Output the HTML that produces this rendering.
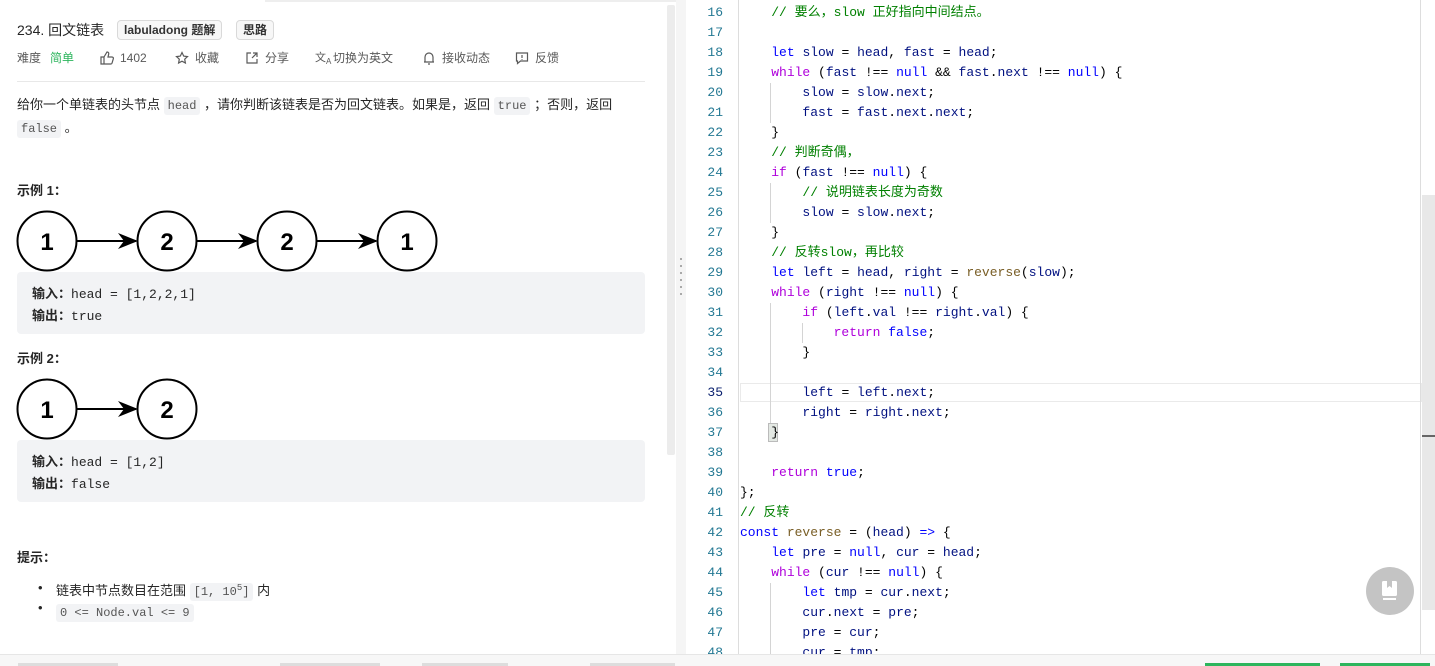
<!DOCTYPE html>
<html><head><meta charset="utf-8"><style>
*{margin:0;padding:0;box-sizing:border-box}
body{width:1435px;height:666px;overflow:hidden;background:#fff;position:relative;font-family:"Liberation Sans","Noto Sans CJK SC",sans-serif;color:#262626}
.abs{position:absolute}
.tag{position:absolute;top:20px;height:20px;border:1px solid #d9d9d9;border-radius:4px;background:#f7f7f7;font-size:12px;font-weight:bold;line-height:18px;padding:0 6px;color:#333}
.meta{position:absolute;top:50px;font-size:12px;color:#595959;line-height:16px}
.ic{position:absolute;top:51px}
code.i{font-family:"Liberation Mono",monospace;font-size:12px;background:#f2f3f5;color:#555;padding:2px 4px;border-radius:3px}
.box{position:absolute;left:17px;width:628px;background:#f2f3f5;border-radius:4px;font-size:13px;padding:11px 15px;line-height:21px}
.box b{font-weight:bold}
.box span{font-family:"Liberation Mono",monospace;font-size:13px}
.ln{position:absolute;left:686px;width:37px;text-align:right;font-family:"Liberation Mono",monospace;font-size:13px;color:#237893;line-height:20px}
.cl{position:absolute;left:740px;font-family:"Liberation Mono","Noto Sans CJK SC",monospace;font-size:13px;line-height:20px;white-space:pre;color:#000}
.k{color:#0000ff}.c{color:#008000}.w{color:#af00db}.v{color:#001080}.f{color:#795e26}
</style></head><body>
<div class="abs" style="left:265px;top:0;width:415px;height:2px;background:#eee"></div>
<div class="abs" style="left:17px;top:20px;font-size:14px;line-height:20px">234. 回文链表</div>
<div class="tag" style="left:117px">labuladong 题解</div>
<div class="tag" style="left:236px">思路</div>
<div class="meta" style="left:17px">难度</div>
<div class="meta" style="left:50px;color:#2db55d">简单</div>
<svg class="ic" style="left:100px" width="14" height="14" fill="none" stroke="#595959" stroke-width="1.2"><path d="M1 6h3v7H1zM4 6l3-5c1.5 0 2 1 1.6 2.5L8 6h4c1 0 1.6.8 1.3 1.8l-1.3 4.4c-.2.5-.6.8-1.1.8H4"/></svg>
<div class="meta" style="left:120px">1402</div>
<svg class="ic" style="left:175px" width="14" height="14" fill="none" stroke="#595959" stroke-width="1.2"><path d="M7 1.5l1.7 3.6 3.8.5-2.8 2.6.7 3.8L7 10.2 3.6 12l.7-3.8L1.5 5.6l3.8-.5z"/></svg>
<div class="meta" style="left:195px">收藏</div>
<svg class="ic" style="left:245px" width="14" height="14" fill="none" stroke="#595959" stroke-width="1.2"><path d="M6 2H2v10h10V8M8 2h4v4M12 2L7 7"/></svg>
<div class="meta" style="left:265px">分享</div>
<div class="meta" style="left:315px;font-size:11px">文<sub style="font-size:8px">A</sub></div>
<div class="meta" style="left:333px">切换为英文</div>
<svg class="ic" style="left:422px" width="14" height="14" fill="none" stroke="#595959" stroke-width="1.2"><path d="M3 11V6a4 4 0 018 0v5zM2 11h10M6 13h2"/></svg>
<div class="meta" style="left:442px">接收动态</div>
<svg class="ic" style="left:515px" width="14" height="14" fill="none" stroke="#595959" stroke-width="1.2"><path d="M1.5 2h11v8h-7l-3 2.5V10h-1z"/><path d="M7 4v3M7 8v.8"/></svg>
<div class="meta" style="left:535px">反馈</div>
<div class="abs" style="left:17px;top:81px;width:628px;height:1px;background:#e8e8e8"></div>
<div class="abs" style="left:17px;top:94px;font-size:13px;line-height:22px;width:630px">给你一个单链表的头节点 <code class="i">head</code> ，请你判断该链表是否为回文链表。如果是，返回 <code class="i">true</code> ；否则，返回<br><code class="i">false</code> 。</div>
<div class="abs" style="left:17px;top:180px;font-size:13px;font-weight:bold">示例 1：</div>
<svg class="abs" style="left:0;top:205px" width="460" height="72">
<defs><marker id="a" markerWidth="10" markerHeight="8" refX="9" refY="4" orient="auto"><path d="M0,0 L10,4 L0,8 L3,4Z" fill="#000"/></marker></defs>
<g fill="none" stroke="#000" stroke-width="2">
<circle cx="47" cy="36" r="29.5"/><circle cx="167" cy="36" r="29.5"/><circle cx="287" cy="36" r="29.5"/><circle cx="407" cy="36" r="29.5"/>
<line x1="77" y1="36" x2="136" y2="36" marker-end="url(#a)"/><line x1="197" y1="36" x2="256" y2="36" marker-end="url(#a)"/><line x1="317" y1="36" x2="376" y2="36" marker-end="url(#a)"/></g>
<g font-family="Liberation Sans" font-weight="bold" font-size="24" text-anchor="middle"><text x="47" y="45">1</text><text x="167" y="45">2</text><text x="287" y="45">2</text><text x="407" y="45">1</text></g></svg>
<div class="box" style="top:272px;height:62px"><b>输入：</b><span>head = [1,2,2,1]</span><br><b>输出：</b><span>true</span></div>
<div class="abs" style="left:17px;top:348px;font-size:13px;font-weight:bold">示例 2：</div>
<svg class="abs" style="left:0;top:373px" width="200" height="72">
<g fill="none" stroke="#000" stroke-width="2"><circle cx="47" cy="36" r="29.5"/><circle cx="167" cy="36" r="29.5"/>
<line x1="77" y1="36" x2="136" y2="36" marker-end="url(#a)"/></g>
<g font-family="Liberation Sans" font-weight="bold" font-size="24" text-anchor="middle"><text x="47" y="45">1</text><text x="167" y="45">2</text></g></svg>
<div class="box" style="top:440px;height:62px"><b>输入：</b><span>head = [1,2]</span><br><b>输出：</b><span>false</span></div>
<div class="abs" style="left:17px;top:547px;font-size:13px;font-weight:bold">提示：</div>
<div class="abs" style="left:38px;top:578px;font-size:13px;line-height:20px">•</div>
<div class="abs" style="left:38px;top:598px;font-size:13px;line-height:20px">•</div>
<div class="abs" style="left:56px;top:578px;font-size:13px;line-height:20px">链表中节点数目在范围 <code class="i">[1, 10<sup style="font-size:9px">5</sup>]</code> 内<br><code class="i">0 &lt;= Node.val &lt;= 9</code></div>
<div class="abs" style="left:667px;top:5px;width:8px;height:450px;background:#ececec;border-radius:2px"></div>
<div class="abs" style="left:676px;top:0;width:10px;height:654px;background:#f5f5f5"></div>
<div class="abs" style="left:680px;top:258px;width:2px;height:42px;background:repeating-linear-gradient(#aaa 0 2px,transparent 2px 7px)"></div>
<div class="abs" style="left:0;top:654px;width:1435px;height:12px;background:#f7f7f7;border-top:1px solid #e6e6e6"></div>
<div class="abs" style="left:18px;top:663px;width:100px;height:3px;background:#ddd"></div>
<div class="abs" style="left:280px;top:663px;width:100px;height:3px;background:#ddd"></div>
<div class="abs" style="left:422px;top:663px;width:86px;height:3px;background:#ddd"></div>
<div class="abs" style="left:590px;top:663px;width:85px;height:3px;background:#ddd"></div>
<div class="abs" style="left:738px;top:0;width:1px;height:654px;background:#ddd"></div>
<div class="abs" style="left:740px;top:383px;width:682px;height:19px;border:1px solid #eaeaea"></div>
<div class="abs" style="left:1422px;top:195px;width:13px;height:415px;background:#e8e8e8"></div>
<div class="abs" style="left:1422px;top:435px;width:13px;height:2px;background:#666"></div>
<div class="abs" style="left:1420px;top:0;width:1px;height:654px;background:#ddd"></div>
<div class="abs" style="left:770px;top:83px;width:1px;height:40px;background:#d4d4d4"></div>
<div class="abs" style="left:770px;top:183px;width:1px;height:40px;background:#d4d4d4"></div>
<div class="abs" style="left:770px;top:303px;width:1px;height:120px;background:#d4d4d4"></div>
<div class="abs" style="left:802px;top:323px;width:1px;height:20px;background:#d4d4d4"></div>
<div class="abs" style="left:770px;top:583px;width:1px;height:71px;background:#d4d4d4"></div>
<div class="abs" style="left:768px;top:423px;width:10px;height:19px;background:#e3e8e3;border:1px solid #bbb"></div>
<div class="ln" style="top:3px">16<br>17<br>18<br>19<br>20<br>21<br>22<br>23<br>24<br>25<br>26<br>27<br>28<br>29<br>30<br>31<br>32<br>33<br>34<br><span style="color:#0b216f">35</span><br>36<br>37<br>38<br>39<br>40<br>41<br>42<br>43<br>44<br>45<br>46<br>47<br>48</div>
<div class="cl" style="top:3px"><span class="c">    // 要么，slow 正好指向中间结点。</span>

    <span class="k">let</span> <span class="v">slow</span> = <span class="v">head</span>, <span class="v">fast</span> = <span class="v">head</span>;
    <span class="w">while</span> (<span class="v">fast</span> !== <span class="k">null</span> &amp;&amp; <span class="v">fast</span>.<span class="v">next</span> !== <span class="k">null</span>) {
        <span class="v">slow</span> = <span class="v">slow</span>.<span class="v">next</span>;
        <span class="v">fast</span> = <span class="v">fast</span>.<span class="v">next</span>.<span class="v">next</span>;
    }
    <span class="c">// 判断奇偶，</span>
    <span class="w">if</span> (<span class="v">fast</span> !== <span class="k">null</span>) {
        <span class="c">// 说明链表长度为奇数</span>
        <span class="v">slow</span> = <span class="v">slow</span>.<span class="v">next</span>;
    }
    <span class="c">// 反转slow，再比较</span>
    <span class="k">let</span> <span class="v">left</span> = <span class="v">head</span>, <span class="v">right</span> = <span class="f">reverse</span>(<span class="v">slow</span>);
    <span class="w">while</span> (<span class="v">right</span> !== <span class="k">null</span>) {
        <span class="w">if</span> (<span class="v">left</span>.<span class="v">val</span> !== <span class="v">right</span>.<span class="v">val</span>) {
            <span class="w">return</span> <span class="k">false</span>;
        }

        <span class="v">left</span> = <span class="v">left</span>.<span class="v">next</span>;
        <span class="v">right</span> = <span class="v">right</span>.<span class="v">next</span>;
    }

    <span class="w">return</span> <span class="k">true</span>;
};
<span class="c">// 反转</span>
<span class="k">const</span> <span class="f">reverse</span> = (<span class="v">head</span>) <span class="k">=&gt;</span> {
    <span class="k">let</span> <span class="v">pre</span> = <span class="k">null</span>, <span class="v">cur</span> = <span class="v">head</span>;
    <span class="w">while</span> (<span class="v">cur</span> !== <span class="k">null</span>) {
        <span class="k">let</span> <span class="v">tmp</span> = <span class="v">cur</span>.<span class="v">next</span>;
        <span class="v">cur</span>.<span class="v">next</span> = <span class="v">pre</span>;
        <span class="v">pre</span> = <span class="v">cur</span>;
        <span class="v">cur</span> = <span class="v">tmp</span>;</div>
<div class="abs" style="left:686px;top:654px;width:749px;height:12px;background:#f7f7f7;border-top:1px solid #e6e6e6"></div>
<div class="abs" style="left:1205px;top:663px;width:115px;height:3px;background:#2db55d"></div>
<div class="abs" style="left:1340px;top:663px;width:90px;height:3px;background:#2db55d"></div>
<div class="abs" style="left:1366px;top:567px;width:48px;height:48px;border-radius:50%;background:#c4c4c4"></div>
<svg class="abs" style="left:1380px;top:580px" width="20" height="22"><rect x="2" y="1" width="15" height="15" rx="1.5" fill="#fff"/><path d="M7 1v7l2.5-2 2.5 2V1" fill="#c4c4c4"/><rect x="3" y="18" width="13" height="2" fill="#fff"/></svg>
</body></html>
